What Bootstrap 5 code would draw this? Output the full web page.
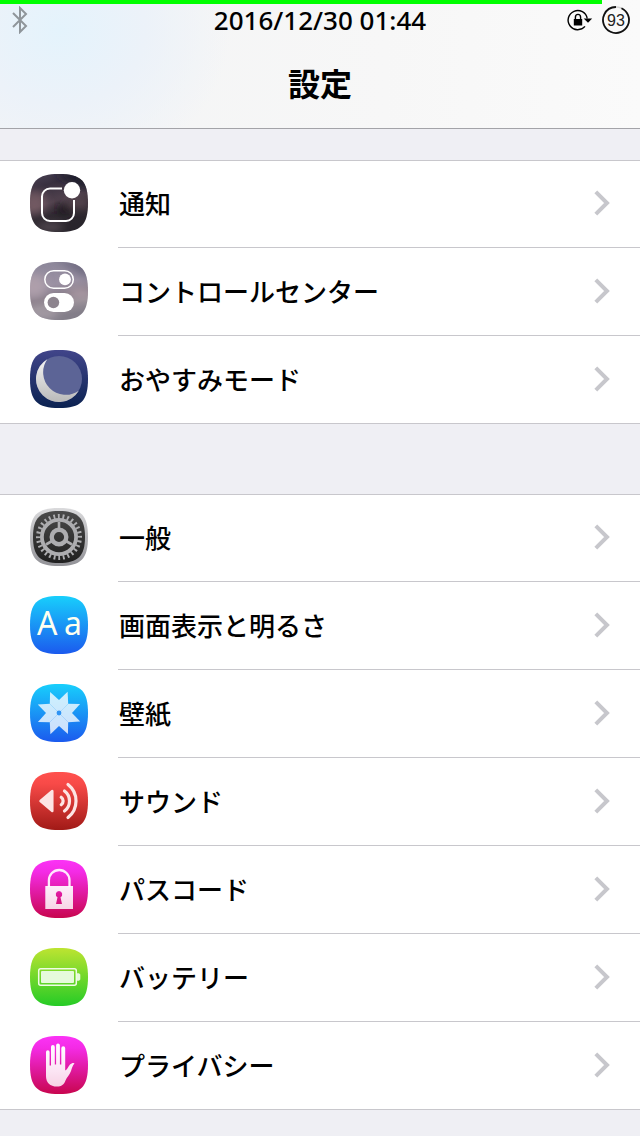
<!DOCTYPE html>
<html lang="ja">
<head>
<meta charset="utf-8">
<meta name="viewport" content="width=device-width, initial-scale=1">
<title>設定</title>
<link href="https://cdn.jsdelivr.net/npm/bootstrap@5.3.0/dist/css/bootstrap.min.css" rel="stylesheet">
<style>
body{background:#efeff4;color:#000;font-family:"Noto Sans","Noto Sans CJK JP",sans-serif;font-size:26px;font-weight:500;line-height:32px}
.top-area{background:radial-gradient(ellipse 170px 150px at 60px 30px,#e4f3fc,#ecf2f9 50%,rgba(243,244,245,0)),linear-gradient(90deg,#f3f4f5,#f7f7f7 60%,#fafafa);border-bottom:1px solid #a3a3a8;padding-bottom:24px}
.charge{height:4px;background:transparent;border-radius:0}
.charge .progress-bar{background:#0f0}
.status{height:32px;padding:0 10px}
.side{flex:1 1 0}
.page-title{font-size:32px;font-weight:700;line-height:40px;margin-top:28px}
.group-gap{margin-top:31px}
.group-gap-wide{margin-top:70px}
.settings{background:#fff;box-shadow:inset 0 1px #c8c7cc;border-radius:0}
.setting{color:#000;padding-left:30px;border-bottom:1px solid transparent}
.setting:last-child{border-color:#c8c7cc}
.setting:hover{color:#000}
.app-icon{width:58px;height:58px;margin:14px 30px 15px 0}
.setting-body{height:88px;margin-bottom:-1px;padding:1px 30px 0 1px;border-bottom:1px solid #c8c7cc}
.setting-body svg{margin-bottom:3px}
.setting:last-child .setting-body{border-color:transparent}
</style>
</head>
<body>
<svg width="0" height="0" class="position-absolute" aria-hidden="true">
<defs>
<path id="tile" d="M29 0C51 0 58 7 58 29S51 58 29 58 0 51 0 29 7 0 29 0z"/>
<clipPath id="tileClip"><use href="#tile"/></clipPath>
<linearGradient id="dusk" x2="0.3" y2="1"><stop stop-color="#4b4255"/><stop offset=".25" stop-color="#38303f"/><stop offset=".55" stop-color="#51424e"/><stop offset=".75" stop-color="#2e2830"/><stop offset="1" stop-color="#29252c"/></linearGradient>
<linearGradient id="haze" x2="0.2" y2="1"><stop stop-color="#8b8699"/><stop offset=".45" stop-color="#9b91a3"/><stop offset=".65" stop-color="#8a7f8b"/><stop offset=".8" stop-color="#9a9199"/><stop offset="1" stop-color="#837e89"/></linearGradient>
<linearGradient id="navy" x2="0" y2="1"><stop stop-color="#41458a"/><stop offset="1" stop-color="#0b2251"/></linearGradient>
<linearGradient id="silver" x2="0" y2="1"><stop stop-color="#f4f4f4"/><stop offset="1" stop-color="#b9b9b9"/></linearGradient>
<linearGradient id="rim" x2="0" y2="1"><stop stop-color="#dadadc"/><stop offset="1" stop-color="#929297"/></linearGradient>
<linearGradient id="coal" x2="0" y2="1"><stop stop-color="#4a4a4a"/><stop offset="1" stop-color="#202020"/></linearGradient>
<linearGradient id="blue" x2="0" y2="1"><stop stop-color="#18cffc"/><stop offset="1" stop-color="#1b5aee"/></linearGradient>
<linearGradient id="red" x2="0" y2="1"><stop stop-color="#ff514e"/><stop offset=".2" stop-color="#f84a48"/><stop offset="1" stop-color="#a11a17"/></linearGradient>
<linearGradient id="pink" x2="0" y2="1"><stop stop-color="#fb33f6"/><stop offset=".2" stop-color="#f42be6"/><stop offset="1" stop-color="#c8064f"/></linearGradient>
<linearGradient id="green" x2="0" y2="1"><stop stop-color="#bde431"/><stop offset="1" stop-color="#25cb26"/></linearGradient>
<linearGradient id="pale" gradientUnits="userSpaceOnUse" x1="0" x2="0" y1="8" y2="50"><stop stop-color="#fff"/><stop offset="1" stop-color="#fff" stop-opacity=".82"/></linearGradient>
<filter id="soft"><feGaussianBlur stdDeviation="4"/></filter>
<path id="petal" d="M29 29 29 16 37.600 7.800 38.200 19.800z"/>
<symbol id="chevron" viewBox="0 0 16 26"><path d="M1.8 1.8 13 13 1.8 24.2" fill="none" stroke="#c7c7cc" stroke-width="4"/></symbol>
</defs>
</svg>

<header class="top-area">
  <div class="progress charge" role="progressbar" aria-label="バッテリー残量" aria-valuenow="94" aria-valuemin="0" aria-valuemax="100"><div class="progress-bar" style="width:94%"></div></div>
  <div class="status d-flex align-items-center">
    <div class="side d-flex">
      <svg width="18" height="28" viewBox="-2 0 18 28" fill="none" stroke="#8f959a" stroke-width="2" aria-label="Bluetooth"><path d="M1 7 14 20 8 26V2l6 6L1 21"/></svg>
    </div>
    <time datetime="2016-12-30T01:44">2016/12/30 01:44</time>
    <div class="side d-flex justify-content-end align-items-center gap-2">
      <svg width="28" height="24" viewBox="1 0 28 24" aria-label="画面の向きをロック"><path d="M22.2 10.500A9.6 9.6 0 1 0 20 18.4" fill="none" stroke="#000" stroke-width="1.4"/><path d="M18.700 10.500h8.500L23 14.800z"/><path d="M8.800 11h8.400v6.500H8.800z"/><path d="M10.400 11.500V9.300a2.600 2.900 0 0 1 5.200 0v2.200" fill="none" stroke="#000" stroke-width="1.4"/></svg>
      <svg width="28" height="28" viewBox="0 0 28 28"><circle cx="14" cy="14" r="13" fill="none" stroke="#d4d4d4" stroke-width="1.600"/><circle cx="14" cy="14" r="13" fill="none" stroke="#111" stroke-width="1.800" pathLength="100" stroke-dasharray="93 7" transform="rotate(-65 14 14)"/><text x="14" y="19.500" text-anchor="middle" font-family="Liberation Sans, sans-serif" font-size="16" font-weight="400" fill="#222">93</text></svg>
    </div>
  </div>
  <h1 class="page-title text-center mb-0">設定</h1>
</header>

<main>
<nav class="list-group settings group-gap" aria-label="通知と表示">
  <a href="#notifications" class="setting d-flex text-decoration-none">
    <svg class="app-icon flex-shrink-0" viewBox="0 0 58 58"><g clip-path="url(#tileClip)"><path fill="url(#dusk)" d="M0 0h58v58H0z"/><g filter="url(#soft)"><ellipse cx="4" cy="28" rx="12" ry="12" fill="#8a6a72" opacity=".6"/><ellipse cx="34" cy="36" rx="9" ry="4" fill="#1d181c"/><ellipse cx="50" cy="30" rx="12" ry="5" fill="#69525c" opacity=".7"/><ellipse cx="20" cy="53" rx="14" ry="4" fill="#6d6068" opacity=".7"/><path d="M22-2h38v20z" fill="#1d1a2a"/></g></g><path d="M32 14.500H20a8 8 0 0 0-8 8V39a8 8 0 0 0 8 8h16a8 8 0 0 0 8-8V26" fill="none" stroke="#fff" stroke-width="2"/><circle cx="42" cy="16.300" r="8.200" fill="#fff"/></svg>
    <span class="setting-body d-flex flex-grow-1 align-items-center justify-content-between">通知<svg width="16" height="26"><use href="#chevron"/></svg></span>
  </a>
  <a href="#control-center" class="setting d-flex text-decoration-none">
    <svg class="app-icon flex-shrink-0" viewBox="0 0 58 58"><g clip-path="url(#tileClip)"><path fill="url(#haze)" d="M0 0h58v58H0z"/><g filter="url(#soft)"><ellipse cx="4" cy="24" rx="12" ry="12" fill="#b3a2ac" opacity=".8"/><ellipse cx="50" cy="31" rx="12" ry="4" fill="#b09da7"/><path d="M25-2h35v20z" fill="#706c81"/><ellipse cx="14" cy="52" rx="15" ry="4" fill="#aaa1aa"/></g></g><rect x="14.800" y="8.700" width="28.500" height="17.600" rx="8.800" fill="none" stroke="#fff" stroke-width="1.500"/><circle cx="35" cy="17.400" r="5.900" fill="#fff"/><rect x="14" y="31" width="30" height="19" rx="9.500" fill="#fff"/><circle cx="23.400" cy="40.500" r="5.800" fill="#8d848e"/></svg>
    <span class="setting-body d-flex flex-grow-1 align-items-center justify-content-between">コントロールセンター<svg width="16" height="26"><use href="#chevron"/></svg></span>
  </a>
  <a href="#do-not-disturb" class="setting d-flex text-decoration-none">
    <svg class="app-icon flex-shrink-0" viewBox="0 0 58 58"><use href="#tile" fill="url(#navy)"/><circle cx="29" cy="29" r="23" fill="#5c6496"/><path d="M17.300 9.200A23 23 0 1 0 48.800 40.700 22.600 22.600 0 0 1 17.300 9.200z" fill="url(#silver)"/></svg>
    <span class="setting-body d-flex flex-grow-1 align-items-center justify-content-between">おやすみモード<svg width="16" height="26"><use href="#chevron"/></svg></span>
  </a>
</nav>

<nav class="list-group settings group-gap-wide" aria-label="本体の設定">
  <a href="#general" class="setting d-flex text-decoration-none">
    <svg class="app-icon flex-shrink-0" viewBox="0 0 58 58"><use href="#tile" fill="url(#rim)"/><path d="M29 3C48 3 55 10 55 29S48 55 29 55 3 48 3 29 10 3 29 3z" fill="url(#coal)"/><g fill="none" stroke="#adadb0"><circle cx="29" cy="29" r="20.800" stroke-width="4.400" pathLength="56" stroke-dasharray=".8 1.200" transform="rotate(-93 29 29)"/><circle cx="29" cy="29" r="17.100" stroke-width="3.800"/><circle cx="29" cy="29" r="7.300" stroke-width="4.400"/><path id="spoke" d="M29 21v-7" stroke-width="2.600"/><use href="#spoke" transform="rotate(120 29 29)"/><use href="#spoke" transform="rotate(240 29 29)"/></g></svg>
    <span class="setting-body d-flex flex-grow-1 align-items-center justify-content-between">一般<svg width="16" height="26"><use href="#chevron"/></svg></span>
  </a>
  <a href="#display" class="setting d-flex text-decoration-none">
    <svg class="app-icon flex-shrink-0" viewBox="0 0 58 58"><use href="#tile" fill="url(#blue)"/><text x="7" y="39" font-family="Noto Sans, sans-serif" font-size="32" font-weight="400" fill="#fffff0">A</text><text x="34" y="39" font-family="Noto Sans, sans-serif" font-size="32" font-weight="400" fill="#fffff0">a</text></svg>
    <span class="setting-body d-flex flex-grow-1 align-items-center justify-content-between">画面表示と明るさ<svg width="16" height="26"><use href="#chevron"/></svg></span>
  </a>
  <a href="#wallpaper" class="setting d-flex text-decoration-none">
    <svg class="app-icon flex-shrink-0" viewBox="0 0 58 58"><use href="#tile" fill="url(#blue)"/><g fill="#fff" fill-opacity=".78"><use href="#petal"/><use href="#petal" transform="rotate(45 29 29)"/><use href="#petal" transform="rotate(90 29 29)"/><use href="#petal" transform="rotate(135 29 29)"/><use href="#petal" transform="rotate(180 29 29)"/><use href="#petal" transform="rotate(225 29 29)"/><use href="#petal" transform="rotate(270 29 29)"/><use href="#petal" transform="rotate(315 29 29)"/></g><circle cx="29" cy="29" r="2.400" fill="#2f93f4"/></svg>
    <span class="setting-body d-flex flex-grow-1 align-items-center justify-content-between">壁紙<svg width="16" height="26"><use href="#chevron"/></svg></span>
  </a>
  <a href="#sound" class="setting d-flex text-decoration-none">
    <svg class="app-icon flex-shrink-0" viewBox="0 0 58 58"><use href="#tile" fill="url(#red)"/><path d="M10.500 29 22.300 19v20z" fill="#fde4e4" stroke="#fde4e4" stroke-width="2.500" stroke-linejoin="round"/><g fill="none" stroke="#fde4e4" stroke-width="3.200" stroke-linecap="round"><path d="M31.200 25.300a4.500 4.500 0 0 1 0 7.400"/><path d="M34.500 19a12.500 12.500 0 0 1 0 20"/><path d="M38 12.500a21 21 0 0 1 0 33"/></g></svg>
    <span class="setting-body d-flex flex-grow-1 align-items-center justify-content-between">サウンド<svg width="16" height="26"><use href="#chevron"/></svg></span>
  </a>
  <a href="#passcode" class="setting d-flex text-decoration-none">
    <svg class="app-icon flex-shrink-0" viewBox="0 0 58 58"><use href="#tile" fill="url(#pink)"/><path d="M18.900 27V20.300a10.300 10.300 0 0 1 20.600 0V27" fill="none" stroke="#ffe9fd" stroke-width="2.300"/><path d="M15.300 26H43v23H15.300zM29 31a3.300 3.300 0 0 0-1.500 6.200L26 44h6l-1.500-6.800A3.300 3.300 0 0 0 29 31z" fill="url(#pale)" fill-rule="evenodd"/></svg>
    <span class="setting-body d-flex flex-grow-1 align-items-center justify-content-between">パスコード<svg width="16" height="26"><use href="#chevron"/></svg></span>
  </a>
  <a href="#battery" class="setting d-flex text-decoration-none">
    <svg class="app-icon flex-shrink-0" viewBox="0 0 58 58"><use href="#tile" fill="url(#green)"/><rect x="8.700" y="20.700" width="37.600" height="16.600" rx="2" fill="none" stroke="#f0fbe6" stroke-width="1.500"/><rect x="11" y="23" width="33" height="12" rx="1" fill="#e6fadb"/><path d="M47 25.300h2l1.300 1.200v5L49 32.700h-2z" fill="#e6fadb"/></svg>
    <span class="setting-body d-flex flex-grow-1 align-items-center justify-content-between">バッテリー<svg width="16" height="26"><use href="#chevron"/></svg></span>
  </a>
  <a href="#privacy" class="setting d-flex text-decoration-none">
    <svg class="app-icon flex-shrink-0" viewBox="0 0 58 58"><use href="#tile" fill="url(#pink)"/><path d="M16 40V16a1.800 1.800 0 0 1 3.600 0V29.500H21V11a1.900 1.900 0 0 1 3.800 0V28.500h1.300V9.500a1.900 1.900 0 0 1 3.800 0V28.500h1.400V12.300a1.900 1.900 0 0 1 3.900 0V34.500C37.500 33.500 38 30.500 40 28.500 41.500 27 44 26.500 44.500 27.500 42.500 29.500 42 32 41 35 39.500 39 37 41 35.500 44.500 34 48.500 31.500 50.600 27 50.600 20 50.600 16 46.500 16 40z" fill="url(#pale)"/></svg>
    <span class="setting-body d-flex flex-grow-1 align-items-center justify-content-between">プライバシー<svg width="16" height="26"><use href="#chevron"/></svg></span>
  </a>
</nav>
</main>
<script src="https://cdn.jsdelivr.net/npm/bootstrap@5.3.0/dist/js/bootstrap.bundle.min.js"></script>
</body>
</html>
